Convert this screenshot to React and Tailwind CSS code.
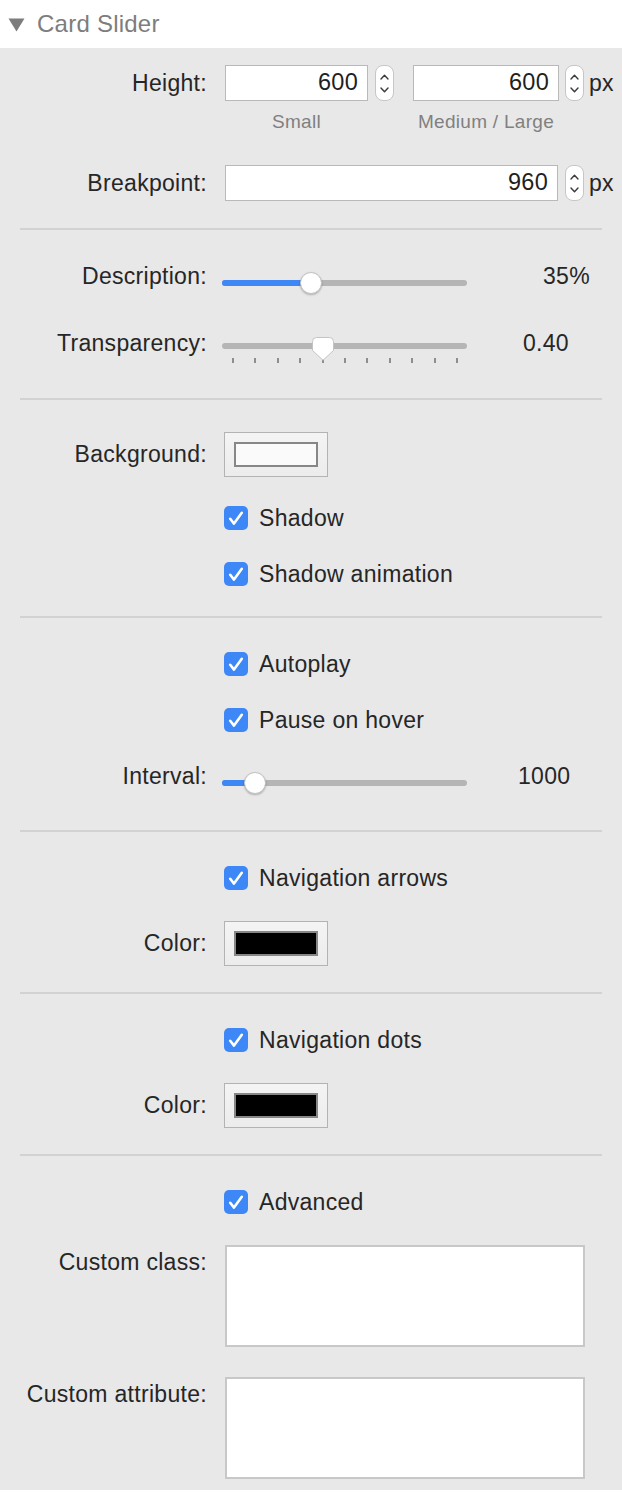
import React from 'react';

const font = { fontFamily: '"Liberation Sans", Arial, sans-serif' };

function Row({ label, className, labelClass, children }) {
  return (
    <div className={`flex gap-[18px] ${className}`}>
      <div className={`w-[207px] shrink-0 text-right ${labelClass || ''}`}>{label}</div>
      <div className="flex flex-1 min-w-0 items-center">{children}</div>
    </div>
  );
}

function Stepper() {
  return (
    <div className="w-[19px] h-[36px] rounded-[8px] bg-white border border-[#c6c6c6] flex flex-col items-center justify-center gap-[7px]">
      <svg width="9" height="6" viewBox="0 0 9 6">
        <path d="M1 5 L4.5 1.2 L8 5" stroke="#3a3a3a" strokeWidth="1.4" fill="none" strokeLinecap="round" strokeLinejoin="round" />
      </svg>
      <svg width="9" height="6" viewBox="0 0 9 6">
        <path d="M1 1 L4.5 4.8 L8 1" stroke="#3a3a3a" strokeWidth="1.4" fill="none" strokeLinecap="round" strokeLinejoin="round" />
      </svg>
    </div>
  );
}

function NumberBox({ value, className }) {
  return (
    <div className={`h-[36px] bg-white border-[1.5px] border-[#b9b9b9] flex items-center justify-end pr-[9px] text-[23.5px] text-[#1f1f1f] ${className}`}>
      {value}
    </div>
  );
}

function Check({ label }) {
  return (
    <div className="flex items-center -ml-[1px]">
      <div className="w-[24px] h-[24px] rounded-[5px] bg-[#3d87f6]">
        <svg width="24" height="24" viewBox="0 0 24 24">
          <path d="M6.2 12.8 L10 17.6 L17.8 6.8" stroke="white" strokeWidth="2.6" fill="none" strokeLinecap="round" strokeLinejoin="round" />
        </svg>
      </div>
      <span className="ml-[11px] text-[23px] text-[#262626] leading-[24px]">{label}</span>
    </div>
  );
}

function Slider({ knob, fill, round = true }) {
  return (
    <div className="relative w-[245px] h-[6px] rounded-full bg-[#b5b5b5] -ml-[3px]">
      {fill > 0 && (
        <div className="absolute left-0 top-0 h-full rounded-full bg-[#3e87f5]" style={{ width: fill }} />
      )}
      {round ? (
        <div
          className="absolute top-[-8px] w-[22px] h-[22px] rounded-full bg-white border border-[#c3c3c3] shadow-[0_1px_2px_rgba(0,0,0,0.25)]"
          style={{ left: knob - 11 }}
        />
      ) : (
        <svg className="absolute top-[-6px]" style={{ left: knob - 11 }} width="22" height="24" viewBox="0 0 22 24">
          <path
            d="M4.5 0.5 H17.5 Q21.5 0.5 21.5 4.5 V13.5 L11 23.2 L0.5 13.5 V4.5 Q0.5 0.5 4.5 0.5 Z"
            fill="white"
            stroke="#c3c3c3"
            strokeWidth="1"
          />
        </svg>
      )}
    </div>
  );
}

function Swatch({ color }) {
  return (
    <div className="w-[104px] h-[45px] border-[1.5px] border-[#b3b3b3] bg-gradient-to-b from-[#f4f4f4] to-[#ececec] flex items-center justify-center">
      <div className={`w-[84px] h-[25px] border-2 border-[#878787] ${color}`} />
    </div>
  );
}

function Sep({ className }) {
  return <div className={`h-[2px] mx-[20px] bg-[#d2d2d2] ${className}`} />;
}

export default function App() {
  const ticks = Array.from({ length: 11 });
  return (
    <div className="w-[622px] bg-white" style={font}>
      <div className="h-[48px] bg-white flex items-center">
        <svg className="ml-[8px] mt-[2px]" width="17" height="14" viewBox="0 0 17 14">
          <path d="M0.5 0.5 H16.5 L8.5 13.5 Z" fill="#7d7d7d" />
        </svg>
        <span className="ml-[12px] text-[24px] tracking-[0.01em] text-[#7d7d7d] leading-none">Card Slider</span>
      </div>

      <div className="bg-[#e8e8e8] pt-[17px] pb-[11px] text-[23px] tracking-[0.013em] text-[#262626]">
        <Row label="Height:" className="h-[36px] items-center">
          <NumberBox value="600" className="w-[143px]" />
          <div className="ml-[7px]"><Stepper /></div>
          <NumberBox value="600" className="w-[146px] ml-[19px]" />
          <div className="ml-[6px]"><Stepper /></div>
          <span className="ml-[5px]">px</span>
        </Row>

        <div className="flex mt-[10px] h-[22px] pl-[225px] text-[19px] leading-[22px] text-[#808080]">
          <div className="w-[143px] text-center">Small</div>
          <div className="w-[146px] ml-[45px] text-center">Medium / Large</div>
        </div>

        <Row label="Breakpoint:" className="h-[36px] items-center mt-[32px]">
          <NumberBox value="960" className="w-[333px]" />
          <div className="ml-[7px]"><Stepper /></div>
          <span className="ml-[5px]">px</span>
        </Row>

        <Sep className="mt-[27px]" />

        <Row label="Description:" className="h-[32px] mt-[32px]" labelClass="leading-[28px]">
          <div className="flex items-start self-start">
            <div className="mt-[18px]"><Slider knob={89} fill={89} /></div>
            <span className="ml-[76px] leading-[28px]">35%</span>
          </div>
        </Row>

        <Row label="Transparency:" className="h-[36px] mt-[35px]" labelClass="leading-[28px]">
          <div className="flex items-start self-start">
            <div className="mt-[14px]">
              <Slider knob={101} fill={0} round={false} />
              <div className="flex justify-between w-[245px] -ml-[3px] pl-[10px] pr-[9px] mt-[9px]">
                {ticks.map((_, i) => (
                  <div key={i} className="w-[2px] h-[5px] bg-[#8e8e8e]" />
                ))}
              </div>
            </div>
            <span className="ml-[56px] leading-[28px]">0.40</span>
          </div>
        </Row>

        <Sep className="mt-[33px]" />

        <Row label="Background:" className="h-[45px] items-center mt-[32px]">
          <div className="-ml-[1px]"><Swatch color="bg-[#fafafa]" /></div>
        </Row>

        <Row label="" className="h-[24px] mt-[29px]">
          <Check label="Shadow" />
        </Row>
        <Row label="" className="h-[24px] mt-[32px]">
          <Check label="Shadow animation" />
        </Row>

        <Sep className="mt-[30px]" />

        <Row label="" className="h-[24px] mt-[34px]">
          <Check label="Autoplay" />
        </Row>
        <Row label="" className="h-[24px] mt-[32px]">
          <Check label="Pause on hover" />
        </Row>

        <Row label="Interval:" className="h-[32px] mt-[30px]" labelClass="leading-[28px]">
          <div className="flex items-start self-start">
            <div className="mt-[18px]"><Slider knob={33} fill={33} /></div>
            <span className="ml-[51px] leading-[28px]">1000</span>
          </div>
        </Row>

        <Sep className="mt-[36px]" />

        <Row label="" className="h-[24px] mt-[34px]">
          <Check label="Navigation arrows" />
        </Row>
        <Row label="Color:" className="h-[44px] items-center mt-[31px]">
          <div className="-ml-[1px]"><Swatch color="bg-black" /></div>
        </Row>

        <Sep className="mt-[27px]" />

        <Row label="" className="h-[24px] mt-[34px]">
          <Check label="Navigation dots" />
        </Row>
        <Row label="Color:" className="h-[44px] items-center mt-[31px]">
          <div className="-ml-[1px]"><Swatch color="bg-black" /></div>
        </Row>

        <Sep className="mt-[27px]" />

        <Row label="" className="h-[24px] mt-[34px]">
          <Check label="Advanced" />
        </Row>

        <Row label="Custom class:" className="mt-[31px]" labelClass="pt-[3px] leading-[28px]">
          <div className="self-start w-[360px] h-[102px] bg-white border-2 border-[#c8c8c8]" />
        </Row>
        <Row label="Custom attribute:" className="mt-[30px]" labelClass="pt-[3px] leading-[28px]">
          <div className="self-start w-[360px] h-[102px] bg-white border-2 border-[#c8c8c8]" />
        </Row>
      </div>
    </div>
  );
}
